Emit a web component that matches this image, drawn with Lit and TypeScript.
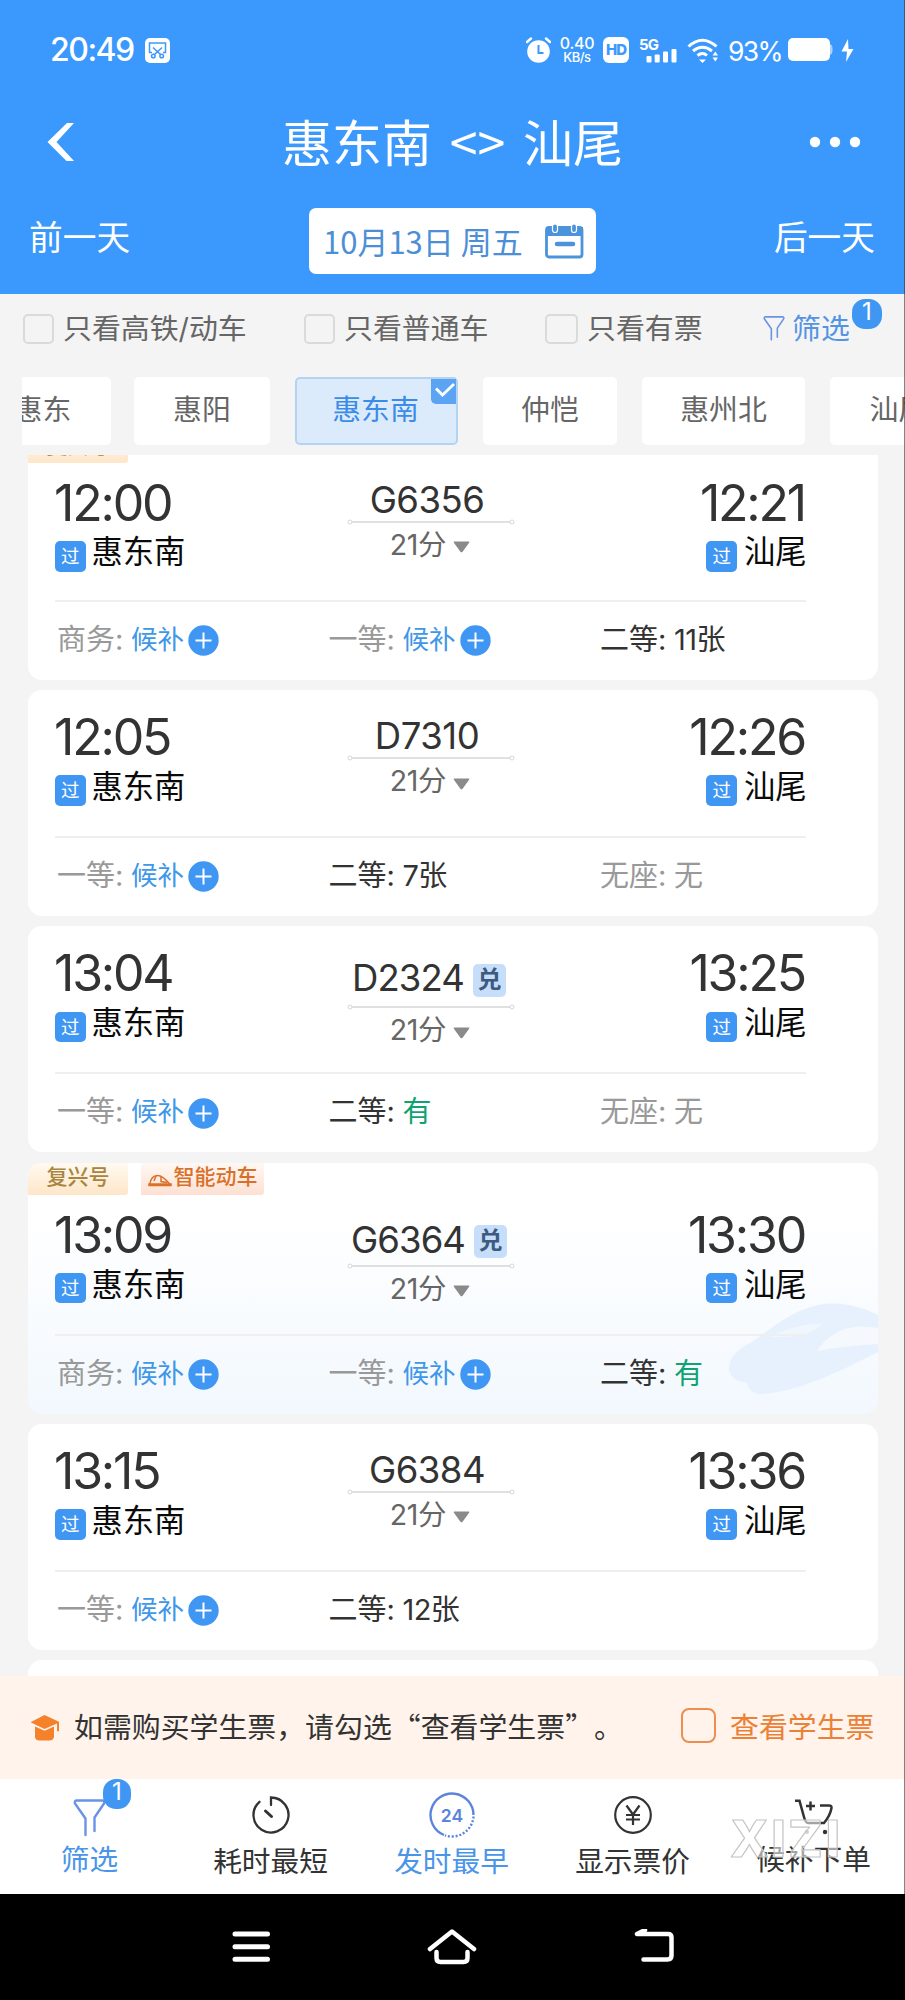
import { LitElement, html, css, nothing } from "lit";
import { customElement, property } from "lit/decorators.js";
import { classMap } from "lit/directives/class-map.js";

type Seat = { name: string; value: string; kind: "wait" | "count" | "has" | "none" };
type Train = {
  depart: string;
  arrive: string;
  code: string;
  redeem?: boolean;
  tags?: string[];
  smart?: boolean;
  cls?: string;
  seats: Seat[];
};

const wait = (name: string): Seat => ({ name, value: "候补", kind: "wait" });
const none = (name: string): Seat => ({ name, value: "无", kind: "none" });
const has = (name: string): Seat => ({ name, value: "有", kind: "has" });
const count = (name: string, n: number): Seat => ({ name, value: `${n}张`, kind: "count" });

const TRAINS: Train[] = [
  { depart: "12:00", arrive: "12:21", code: "G6356", tags: ["复兴号"], cls: "first", seats: [wait("商务"), wait("一等"), count("二等", 11)] },
  { depart: "12:05", arrive: "12:26", code: "D7310", seats: [wait("一等"), count("二等", 7), none("无座")] },
  { depart: "13:04", arrive: "13:25", code: "D2324", redeem: true, seats: [wait("一等"), has("二等"), none("无座")] },
  { depart: "13:09", arrive: "13:30", code: "G6364", redeem: true, tags: ["复兴号"], smart: true, seats: [wait("商务"), wait("一等"), has("二等")] },
  { depart: "13:15", arrive: "13:36", code: "G6384", seats: [wait("一等"), count("二等", 12)] },
];

const base = css`
  *, *::before, *::after { box-sizing: border-box; }
  svg { display: block; flex: none; }
`;

@customElement("train-card")
export class TrainCard extends LitElement {
  @property({ attribute: false }) train!: Train;

  static styles = [base, css`
    :host { display: block; flex: none; }
    .card { position: relative; width: 850px; height: 226px; background: #fff; border-radius: 14px; overflow: hidden; padding-left: 27px; }
    .tagged { height: 251px; }
    .smart { background: linear-gradient(#fff 20%, #f2f8fe); }
    .tags { display: flex; gap: 13px; height: 32px; margin: 0 0 -7px -27px; }
    .tag { display: flex; align-items: center; justify-content: center; width: 100px; height: 32px; font-size: 21px; line-height: 28px; padding-bottom: 3px; font-weight: 500; color: #a9843f; background: linear-gradient(#fffaf0, #fee6c8); border-radius: 0 0 3px 0; }
    .tag.hot { width: 123px; color: #d9702a; background: linear-gradient(#fff8f4, #fde0d2); gap: 2px; }
    .tag.hot svg { margin-top: 6px; }
    .top { display: flex; width: 751px; height: 146px; justify-content: space-between; position: relative; }
    .end { width: 200px; padding-top: 22px; }
    .right { text-align: right; }
    .time { font-size: 50px; line-height: 50px; color: #333; letter-spacing: -2.2px; white-space: nowrap; margin-left: -1px; }
    .right .time { margin-right: 1px; }
    .place { display: flex; align-items: center; gap: 6px; height: 50px; font-size: 31.3px; color: #0a0a0a; line-height: 50px; }
    .right .place { justify-content: flex-end; gap: 7px; margin-right: -.5px; }
    .pass { width: 30.5px; height: 30.5px; border-radius: 5px; background: #3f97f3; color: #fff; font-size: 18.5px; line-height: 30px; text-align: center; margin-top: 7px; }
    .mid { width: 168px; padding-top: 29px; display: flex; flex-direction: column; align-items: center; }
    .code { display: flex; align-items: center; justify-content: center; gap: 9px; height: 35px; font-size: 36.5px; line-height: 35px; color: #333; letter-spacing: -.5px; white-space: nowrap; padding-right: 7px; }
    .redeem { width: 33px; height: 33px; border-radius: 5px; background: #c6defa; color: #3d5a80; font-size: 24px; line-height: 32px; text-align: center; letter-spacing: 0; font-weight: 700; margin-top: 2.5px; }
    .dur { display: flex; align-items: center; gap: 7px; height: 38px; line-height: 38px; font-size: 28.5px; letter-spacing: -.4px; color: #666; padding-right: 1px; }
    .dur svg { margin-top: 5px; }
    .deal .mid { padding-top: 35px; }
    .deal .code { height: 42px; line-height: 34px; align-items: flex-start; padding-right: 3px; letter-spacing: -.9px; }
    .deal.tagged .code { height: 39px; }
    .line { width: 751px; height: 2px; background: #efefef; position: relative; }
    .seats { display: grid; grid-template-columns: 271.5px 271.5px 207px; height: 74px; padding-left: 2px; position: relative; }
    .seat { display: flex; align-items: center; white-space: nowrap; font-size: 29px; line-height: 74px; color: #333; }
    .label { width: 74px; display: flex; }
    .colon { margin-left: 0; }
    .seat.wait, .seat.none { color: #999; }
    .wait .value { color: #3f97e8; font-size: 26.5px; padding-bottom: 2px; }
    .has .value { color: #10a371; }
    .count .value { letter-spacing: -.6px; }
    .wait svg { margin-left: 4px; margin-top: 1.5px; }
    .card.first { height: 249px; }
    .first .mid { padding-top: 26.5px; }
    .first .place { height: 47px; }
    .first .pass { margin-top: 10px; }
    .first .top { height: 143.5px; }
    .bg { position: absolute; right: 0; bottom: 0; }
  `];

  private end(time: string, place: string, right = false) {
    return html`<div class=${classMap({ end: true, right })}>
      <div class="time">${time}</div>
      <div class="place"><span class="pass">过</span><span>${place}</span></div>
    </div>`;
  }

  render() {
    const t = this.train;
    const classes = { card: true, tagged: !!t.tags, smart: !!t.smart, deal: !!t.redeem, first: t.cls === "first" };
    return html`<div class=${classMap(classes)}>
      ${t.smart ? html`<svg class="bg" width="150" height="112" viewBox="0 0 150 112">
        <path d="M1 66C1 56 10 46 24 40 44 26 66 6 96 2c22-2 40 4 54 11v37C126 62 78 88 36 92c-10 1-16-4-17-11C6 79 1 74 1 66Z" fill="#e7f1fd"/>
        <path d="M150 26c-24-4-46 0-61 23 20-4 40-6 61-7Z" fill="#f5f9fe"/>
        <path d="M42 35c14-7 32-14 52-13-6 8-22 14-52 13Z" fill="#eff6fe"/>
      </svg>` : nothing}
      ${t.tags ? html`<div class="tags">
        ${t.tags.map((x) => html`<span class="tag">${x}</span>`)}
        ${t.smart ? html`<span class="tag hot">
          <svg width="24" height="13" viewBox="0 0 24 13" fill="none" stroke="#d9702a" stroke-width="1.5"><path d="M1.500 11C2.500 5 5.500 1.500 9.500 1.500c5 0 9 4.500 13 9.500"/><path d="M8 2L6 7M13 3v4.500l6 1"/><path d="M1 10h22v1.500H1z" fill="#d9702a"/></svg>智能动车</span>` : nothing}
      </div>` : nothing}
      <div class="top">
        ${this.end(t.depart, "惠东南")}
        <div class="mid">
          <div class="code"><span>${t.code}</span>${t.redeem ? html`<span class="redeem">兑</span>` : nothing}</div>
          <svg width="168" height="8" viewBox="0 0 168 8" fill="#fff" stroke="#d6d6d6"><path d="M4 4h160" stroke-width="1.500"/><circle cx="3" cy="4" r="2"/><circle cx="165" cy="4" r="2"/></svg>
          <div class="dur"><span>21分</span><svg width="17" height="12" viewBox="0 0 17 12"><path d="M1.500.5h14q1.500 0 .6 1.200L9.600 10.800q-1.100 1-2.200 0L.9 1.700Q0 .5 1.500.5Z" fill="#8a8a8a"/></svg></div>
        </div>
        ${this.end(t.arrive, "汕尾", true)}
      </div>
      <div class="line"></div>
      <div class="seats">
        ${t.seats.map((s) => html`<div class="seat ${s.kind}">
          <span class="label">${s.name}<span class="colon">:</span></span><span class="value">${s.value}</span>
          ${s.kind === "wait" ? html`<svg width="31" height="31" viewBox="0 0 31 31"><circle cx="15.500" cy="15.500" r="15.200" fill="#3f97f3"/><path d="M15.500 7.500v16M7.500 15.500h16" stroke="#fff" stroke-width="2"/></svg>` : nothing}
        </div>`)}
      </div>
    </div>`;
  }
}

const funnel = (w: number, h: number) => html`<svg width=${w} height=${h} viewBox="0 0 33 38" fill="none" stroke="#6a93e6" stroke-width="2.400" stroke-linecap="round" stroke-linejoin="round">
  <path d="M12.500 36V19.500L2 4.500Q1 1.500 4 1.500h25q3 0 2 3L21.500 18.500V32"/></svg>`;

const TOOL_ICONS = [
  funnel(33, 38),
  html`<svg width="38" height="38" viewBox="0 0 38 38" fill="none" stroke="#333" stroke-width="2.300" stroke-linecap="round"><path d="M19 9V1.500A17.500 17.500 0 1 1 7.500 5.800"/><path d="M13.500 15l6 5.500" stroke-width="3"/></svg>`,
  html`<svg width="46" height="46" viewBox="0 0 46 46" fill="none" stroke="#5c84dc" stroke-width="2.400"><path d="M28 43.500A21.500 21.500 0 1 1 44.500 23" stroke="none"/><path d="M15 43A21.500 21.500 0 1 1 44.500 23"/><path d="M44.500 24.500A21.500 21.500 0 0 1 16 43.300" stroke-dasharray="2 1.800"/><text x="23" y="29.500" text-anchor="middle" font-family="Inter" font-size="17.500" font-weight="600" fill="#5c84dc" stroke="none">24</text></svg>`,
  html`<svg width="38" height="38" viewBox="0 0 38 38" fill="none" stroke="#333" stroke-width="2.200"><circle cx="19" cy="19" r="17.800"/><path d="M12.500 9.500L19 18.500l6.500-9M19 18.500V29M12 19h14M12 23.500h14"/></svg>`,
  html`<svg width="40" height="38" viewBox="0 0 40 38" fill="none" stroke="#333" stroke-width="2.500"><path d="M1 1.800h4.500L10 18q1.500 6 4 6h16c5-6 7-12 7.500-15 .3-2-1-2.500-2.500-2.500h-9M16.500 2.500v9M12 7h9"/><circle cx="13" cy="33" r="2" fill="#999" stroke="none"/><circle cx="31" cy="33" r="2.200" fill="#333" stroke="none"/></svg>`,
];
const TOOLS = ["筛选", "耗时最短", "发时最早", "显示票价", "候补下单"];

@customElement("app-root")
export class AppRoot extends LitElement {
  static styles = [base, css`
    :host { display: block; position: relative; width: 905px; height: 2000px; overflow: hidden; background: #f4f4f4; font-family: Inter, "Noto Sans CJK SC", sans-serif; }
    .page { display: flex; flex-direction: column; height: 2000px; }
    .cjk { font-family: "Noto Sans CJK SC", sans-serif; }
    header { height: 294px; background: #3b98fc; color: #fff; flex: none; }
    .status { height: 100px; display: flex; align-items: center; padding: 0 51px 0 50px; }
    .clock { font-size: 32px; line-height: 40px; font-weight: 450; letter-spacing: -1.5px; width: 95px; }
    .status .grow { flex: 1; }
    .speed { font-size: 16px; line-height: 14px; font-weight: 500; width: 34px; margin: 0 9px; white-space: nowrap; letter-spacing: -.3px; display: flex; flex-direction: column; align-items: center; }
    .speed b { font-weight: 500; font-size: 13px; letter-spacing: -.5px; }
    .hd { width: 26px; height: 26px; border-radius: 6px; background: #fff; color: #3b98fc; font-size: 15px; font-weight: 800; line-height: 26px; text-align: center; letter-spacing: -1px; margin-right: 10px; }
    .wifi { margin-left: 10px; }
    .bolt { margin-left: 7px; }
    .pct { font-size: 26.500px; width: 53px; margin: 0 7px 0 10px; letter-spacing: -1.600px; line-height: 40px; white-space: nowrap; padding-top: 2px; }
    .title { height: 84px; display: grid; grid-template-columns: 110px 1fr 110px; align-items: center; }
    .title h1 { margin: -5px 0 0; font-size: 50px; font-weight: 400; line-height: 80px; text-align: center; white-space: nowrap; word-spacing: 6.500px; }
    .title svg { margin-left: 46px; }
    .title .dots { margin-left: 14px; }
    .days { height: 110px; display: grid; grid-template-columns: 309px 287px 1fr; align-items: center; font-size: 33.700px; }
    .days .prev { padding-left: 29px; margin-top: -7px; }
    .days .next { padding-right: 30px; text-align: right; margin-top: -7px; }
    .date { height: 66px; margin-top: 4px; background: #fff; border-radius: 7px; color: #4d8fd6; display: flex; align-items: center; justify-content: space-between; padding: 0 12px 0 14px; font-size: 31px; line-height: 66px; white-space: nowrap; }
    .filters { display: flex; height: 83px; padding: 20px 0 0 23px; flex: none; font-size: 28.900px; line-height: 30px; color: #666; }
    .opt { display: flex; gap: 9px; white-space: nowrap; height: 30px; }
    .box { width: 31px; height: 30px; border: 2px solid #dadada; border-radius: 5px; flex: none; }
    .o1 { width: 281px; } .o2 { width: 241px; } .o3 { width: 218px; }
    .o3 .box { width: 33px; }
    .sift { color: #5594e4; display: flex; gap: 7px; }
    .sift svg { margin-top: 1px; }
    .badge { width: 30px; height: 30px; border-radius: 13px; background: #3f97f3; color: #fff; font-size: 24px; line-height: 25px; text-align: center; }
    .sift .badge { margin: -15px 0 0 -5px; }
    .chips { display: flex; margin-left: 22px; height: 68px; overflow: hidden; flex: none; font-size: 28.900px; line-height: 66px; color: #666; width: 883px; }
    .chip { flex: none; background: #fff; border-radius: 5px; height: 68px; text-align: center; position: relative; }
    .c0 { width: 137px; margin: 0 23px 0 -48px; }
    .c1 { width: 136px; margin-right: 25px; }
    .c2 { width: 163px; margin-right: 25px; background: #dbebfb; border: 2px solid #b3d3f2; color: #3b8ce8; line-height: 62px; padding-right: 2px; }
    .c3 { width: 134px; margin-right: 25px; }
    .c4 { width: 163px; margin-right: 25px; }
    .c5 { width: 137px; }
    .tick { position: absolute; top: 0; right: 0; width: 25px; height: 25px; background: #5ba4f4; border-radius: 0 0 0 5px; }
    .list { display: flex; flex-direction: column; gap: 10.200px; margin-top: 10px; height: 1221px; flex: none; overflow: hidden; padding-left: 28px; }
    .list > :first-child { margin-top: -24px; }
    .more { width: 850px; height: 60px; flex: none; background: #fff; border-radius: 14px; }
    .student { height: 103px; background: #fff3ec; display: flex; align-items: center; padding: 0 30px; font-size: 28.900px; line-height: 50px; color: #333; flex: none; white-space: nowrap; text-spacing-trim: space-all; }
    .student span { margin-top: -6px; }
    .student .msg { margin-left: 14px; width: 607px; }
    .student .check { width: 35px; height: 35px; border: 2px solid #ee8d52; border-radius: 8px; flex: none; margin-top: -4px; }
    .student .link { color: #ea8136; margin-left: 14px; }
    .tools { height: 115px; background: #fff; display: grid; grid-template-columns: repeat(5, 181px); flex: none; font-size: 28.700px; line-height: 30px; color: #333; position: relative; margin-left: -1px; padding-left: 0; box-shadow: 1px 0 #fff; }
    .tool { display: grid; grid-template-rows: 68px 30px; justify-items: center; align-items: center; position: relative; white-space: nowrap; }
    .tool .ic { padding-top: 3px; }
    .t0 .ic { padding-top: 12px; }
    .t0, .t4 { grid-template-rows: 66px 30px; }
    .t0, .t2 { color: #4a95e8; }
    .t4 .ic { padding-top: 11px; }
    .tool .badge { position: absolute; left: 104px; top: 0; width: 28px; }
    .mark { position: absolute; left: 725px; top: 34px; }
    nav { height: 106px; background: #000; display: flex; justify-content: space-between; padding: 35px 230px 0 232px; flex: none; }
    .edge { position: absolute; right: 0; top: 0; width: 1px; height: 1894px; background: rgba(50, 50, 50, .6); }
  `];

  render() {
    return html`<div class="page" lang="zh-CN">
      <header>
        <div class="status">
          <span class="clock">20:49</span>
          <svg width="25" height="25" viewBox="0 0 25 25"><rect width="25" height="25" rx="5" fill="#fff"/><g fill="none" stroke="#3b98fc" stroke-width="1.500"><path d="M7 14.500H4.500V5h16v9.500H18M8 9.500l7.500 7M17 9.500l-7.500 7"/><circle cx="8.300" cy="18" r="1.800"/><circle cx="16.700" cy="18" r="1.800"/></g></svg>
          <span class="grow"></span>
          <svg width="25" height="26" viewBox="0 0 25 26"><circle cx="12.500" cy="14.500" r="11.300" fill="#fff"/><path d="M1 5l4-3.500M24 5l-4-3.500" stroke="#fff" stroke-width="2.500" stroke-linecap="round"/><path d="M12.500 8v8h5" fill="none" stroke="#3b98fc" stroke-width="2"/></svg>
          <div class="speed"><span>0.40</span><b>KB/s</b></div>
          <div class="hd">HD</div>
          <svg width="38" height="26" viewBox="0 0 38 26" fill="#fff"><text x="0" y="12.500" font-family="Inter" font-size="15" font-weight="700" textLength="20">5G</text><rect x="7.500" y="19" width="5" height="6.500" rx="1"/><rect x="15.700" y="17.500" width="5" height="8" rx="1"/><rect x="24" y="14.500" width="5" height="11" rx="1"/><rect x="32.500" y="12" width="5" height="13.500" rx="1"/></svg>
          <svg class="wifi" width="31" height="25" viewBox="0 0 31 25" fill="none" stroke="#fff" stroke-width="3"><path d="M1.500 8.500Q15.500-4 29.500 8.500M6 13q9.500-7.500 19 0M10.500 17.500q5-4 9.500 0"/><path d="M12 21.500h7l-3.500 3.500z" fill="#fff" stroke="none"/><path d="M25.500 17.500h5.500l-2.700-4zM25.500 19.500h5.500l-2.700 4z" fill="#fff" stroke="none"/></svg>
          <span class="pct">93%</span>
          <svg width="46" height="24" viewBox="0 0 46 24"><path d="M40 6.500h2.500q2 0 2 5t-2 5H40z" fill="#a9d2ff"/><rect width="42" height="23" rx="5" fill="#fff"/></svg>
          <svg class="bolt" width="13" height="23" viewBox="0 0 13 23"><path d="M7 0L.5 12.500H6L5 23l7.500-13H7.500z" fill="#fff"/></svg>
        </div>
        <div class="title">
          <svg width="29" height="40" viewBox="0 0 29 40"><path d="M21 1h7L10.500 20 28 39h-7.500L1.500 20z" fill="#fff"/></svg>
          <h1 class="cjk">惠东南 &lt;&gt; 汕尾</h1>
          <svg class="dots" width="52" height="12" viewBox="0 0 52 12" fill="#fff"><circle cx="6" cy="6" r="5.200"/><circle cx="26" cy="6" r="5.200"/><circle cx="46" cy="6" r="5.200"/></svg>
        </div>
        <div class="days">
          <span class="prev">前一天</span>
          <div class="date cjk"><span>10月13日 周五</span>
            <svg width="39" height="36" viewBox="0 0 39 36"><rect x="1.500" y="4.500" width="35.500" height="29.500" rx="2.500" fill="none" stroke="#4b94dc" stroke-width="2.800"/><path d="M1 4h37v9H1z" fill="#4b94dc"/><path d="M12 21h16" stroke="#4b94dc" stroke-width="4.500" stroke-linecap="round"/><rect x="7.500" y="1" width="5" height="8.500" rx="2.500" fill="#4b94dc" stroke="#fff" stroke-width="1.200"/><rect x="26.500" y="1" width="5" height="8.500" rx="2.500" fill="#4b94dc" stroke="#fff" stroke-width="1.200"/></svg>
          </div>
          <span class="next">后一天</span>
        </div>
      </header>
      <div class="filters">
        <div class="opt o1"><i class="box"></i><span>只看高铁/动车</span></div>
        <div class="opt o2"><i class="box"></i><span>只看普通车</span></div>
        <div class="opt o3"><i class="box"></i><span>只看有票</span></div>
        <div class="sift">${funnel(22, 27)}<span>筛选</span><span class="badge">1</span></div>
      </div>
      <div class="chips">
        ${["惠东", "惠阳", "惠东南", "仲恺", "惠州北", "汕尾"].map((c, i) => html`<div class="chip c${i}">${c}${i === 2
          ? html`<span class="tick"><svg width="25" height="25" viewBox="0 0 25 25" fill="none" stroke="#fff" stroke-width="2.800"><path d="M5 9.500l6.500 6.500L23 5"/></svg></span>` : nothing}</div>`)}
      </div>
      <div class="list">
        ${TRAINS.map((t) => html`<train-card .train=${t}></train-card>`)}
        <div class="more"></div>
      </div>
      <div class="student cjk">
        <svg width="30" height="26" viewBox="0 0 30 26" fill="#f5822a"><path d="M14.500 0L29 6.800v9.500h-2V8.500L14.500 14 .5 7.300z"/><path d="M5 11.500l9.500 4.300 9.500-4.300V22q-1 3.500-4.500 3.500h-10Q5.500 25.500 5 22z"/></svg>
        <span class="msg">如需购买学生票，请勾选“查看学生票”。</span>
        <i class="check"></i><span class="link">查看学生票</span>
      </div>
      <div class="tools">
        ${TOOLS.map((t, i) => html`<div class="tool t${i}"><div class="ic">${TOOL_ICONS[i]}</div><span>${t}</span>${i === 0 ? html`<span class="badge">1</span>` : nothing}</div>`)}
        <svg class="mark" width="130" height="56" viewBox="0 0 130 56"><text x="6" y="44" font-family="Inter" font-size="51" font-weight="800" textLength="110" fill="#fff" fill-opacity=".55" stroke="#c4c4c4" stroke-width="1.200" stroke-linejoin="round">XIZI</text></svg>
      </div>
      <nav>
        <svg width="38" height="34" viewBox="0 0 38 34" stroke="#fff" stroke-width="5" stroke-linecap="round"><path d="M3 5h32.500M3 17.800h32.500M3 30.300h32.500"/></svg>
        <svg width="50" height="40" viewBox="0 0 50 40" fill="none" stroke="#fff" stroke-width="4.500" stroke-linecap="round" stroke-linejoin="round"><path d="M3 20L25 2.500 47 20M9.500 23v6q0 4 4 4h23q4 0 4-4v-6"/></svg>
        <svg width="42" height="40" viewBox="0 0 42 40" fill="none" stroke="#fff" stroke-width="4.500" stroke-linecap="round" stroke-linejoin="round"><path d="M12 1L4 5h31q3.500 0 3.500 3.500v18q0 4-4 4H10.500"/></svg>
      </nav>
      <div class="edge"></div>
    </div>`;
  }
}
